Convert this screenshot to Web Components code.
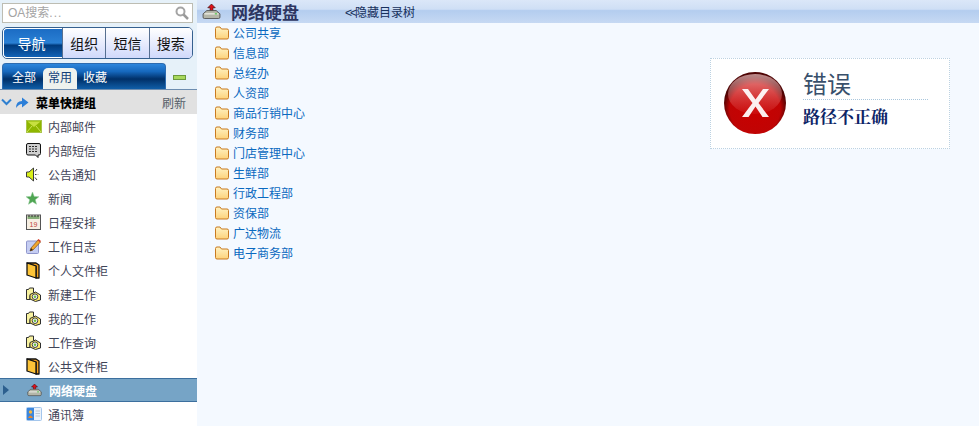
<!DOCTYPE html>
<html>
<head>
<meta charset="utf-8">
<style>
    html, body { margin: 0; height: 100%; overflow: hidden; background: #fff; }
    body { font: 12px "Liberation Sans", "Noto Sans CJK SC", sans-serif; }
</style>
</head>
<body>
<oa-app>
    <oa-sidebar slot="side">
        <menu-item icon="mail">内部邮件</menu-item>
        <menu-item icon="sms">内部短信</menu-item>
        <menu-item icon="speaker">公告通知</menu-item>
        <menu-item icon="star">新闻</menu-item>
        <menu-item icon="calendar">日程安排</menu-item>
        <menu-item icon="note">工作日志</menu-item>
        <menu-item icon="cabinet">个人文件柜</menu-item>
        <menu-item icon="work">新建工作</menu-item>
        <menu-item icon="work">我的工作</menu-item>
        <menu-item icon="work">工作查询</menu-item>
        <menu-item icon="cabinet">公共文件柜</menu-item>
        <menu-item icon="disk" active>网络硬盘</menu-item>
        <menu-item icon="book">通讯簿</menu-item>
    </oa-sidebar>
    <disk-main slot="main">
        <folder-link>公司共享</folder-link>
        <folder-link>信息部</folder-link>
        <folder-link>总经办</folder-link>
        <folder-link>人资部</folder-link>
        <folder-link>商品行销中心</folder-link>
        <folder-link>财务部</folder-link>
        <folder-link>门店管理中心</folder-link>
        <folder-link>生鲜部</folder-link>
        <folder-link>行政工程部</folder-link>
        <folder-link>资保部</folder-link>
        <folder-link>广达物流</folder-link>
        <folder-link>电子商务部</folder-link>
    </disk-main>
</oa-app>
<script>
    // same drawing for the title bar and the menu row, only the size differs
    const diskIcon = (w, h) => `<svg width="${w}" height="${h}" viewBox="0 0 20 16">
        <path d="M8.500 7.500V4H6L10 0l4 4h-2.500v3.500z" fill="#e0101a" stroke="#3a0a0a" stroke-width=".7"/>
        <path d="M5 7h10l4 3.500v3.500q0 1.500-1.500 1.500h-15Q1 15.500 1 14v-3.500z" fill="#b4b6a8" stroke="#4a4a4a" stroke-width=".9"/>
        <path d="M2.500 10.500h15" stroke="#e8e8e0" stroke-width="1.500"/>
        <path d="M13.500 10.500h2.500" stroke="#48c040" stroke-width="1.200"/>
    </svg>`;

    const ICONS = {
        mail: `<svg width="16" height="13" viewBox="0 0 16 13"><rect x=".5" y=".5" width="15" height="12" fill="#8fb600" stroke="#a9c44a"/><path d="M1.500 1.500h13L8 7z" fill="#c8e040"/><path d="M1 12l5-6M15 12l-5-6" stroke="#cfe35a"/></svg>`,
        sms: `<svg width="15" height="15" viewBox="0 0 15 15"><path d="M2 .5h11q1.500 0 1.500 1.500v8.500q0 1.500-1.500 1.500h-1v2.500L9.500 12H2q-1.500 0-1.500-1.500V2Q.5.500 2 .5z" fill="#cfcfcf" stroke="#111"/><path d="M3 3.500h9M3 6h9M3 8.500h9" stroke="#2c2c2c" stroke-dasharray="2 1"/></svg>`,
        speaker: `<svg width="14" height="15" viewBox="0 0 14 15"><path d="M.5 5h2.500L7.500 1v13L3 10H.5z" fill="#d9f01a" stroke="#3c3c3c"/><path d="M9 7.500h1.500M9 4.500l2-2.500M9 10.500l2 2.500" stroke="#3c3c3c"/><path d="M11 7.500h2" stroke="#d8d8c0"/></svg>`,
        star: `<svg width="13" height="13" viewBox="0 0 13 13"><path d="M6.500 0l1.700 4.400 4.700.3-3.600 3 1.200 4.600-4-2.500-4 2.500 1.200-4.600L.1 4.700l4.700-.3z" fill="#4fa552" stroke="#8fc896" stroke-width=".5"/></svg>`,
        calendar: `<svg width="15" height="16" viewBox="0 0 15 16"><rect x=".5" y="1" width="14" height="14.500" fill="#f7efe4" stroke="#555"/><rect x="1.500" y="2" width="12" height="3" fill="#86ad78"/><path d="M3 1v2M6 1v2M9 1v2M12 1v2" stroke="#333"/><text x="7.500" y="13" font-size="7" text-anchor="middle" fill="#c0453c" font-family="Liberation Sans">19</text></svg>`,
        note: `<svg width="15" height="15" viewBox="0 0 15 15"><rect x=".5" y="2" width="12" height="12.500" rx="1" fill="#c5cdf2" stroke="#8f96cc"/><path d="M4 12l1-3 7-8 2.500 2L7 11z" fill="#f2a62e" stroke="#6a4210" stroke-width=".6"/><path d="M11.500 1l1-1 2.500 2-1 1.200z" fill="#d83a2a"/><path d="M4 12l1-3 2 2z" fill="#3a2a10"/></svg>`,
        cabinet: `<svg width="14" height="17" viewBox="0 0 14 17"><path d="M1 1h9l3 2v13h-3V4z" fill="#f2a01c" stroke="#111" stroke-width="1.300" stroke-linejoin="round"/><path d="M1 1l9 3v12l-9-3z" fill="#fdc438" stroke="#111" stroke-width="1.300" stroke-linejoin="round"/></svg>`,
        work: `<svg width="15" height="15" viewBox="0 0 15 15"><path d="M.5 2.500h2l1-1.500h4v4.500h2v3H4v4H.5z" fill="#f8f2a0" stroke="#2e2e2e"/><path d="M4 7.500L9.500 5l5 3v5l-5 1.500L4 12z" fill="#fde868" stroke="#2e2e2e"/><circle cx="9" cy="9.700" r="2.800" fill="#f4f4f4" stroke="#444"/><circle cx="9" cy="9.700" r="1.300" fill="#6cc040"/></svg>`,
        disk: diskIcon(15, 14),
        book: `<svg width="16" height="14" viewBox="0 0 16 14"><rect x=".5" y=".5" width="15" height="13" rx="1" fill="#eaf2fb" stroke="#a4c6ec"/><rect x="1" y="1" width="7" height="12" fill="#3c86dc"/><circle cx="4.500" cy="5" r="1.700" fill="#f6b73c"/><path d="M2 11q2.500-5 5 0z" fill="#e8862a"/><path d="M9.500 4h4.500M9.500 6.500h4.500M9.500 9h4.500" stroke="#bcc8d4"/></svg>`
    };

    class OaApp extends HTMLElement {
        constructor() {
            super();
            this.attachShadow({mode: 'open'}).innerHTML = `
                <style>
                    :host { display: flex; width: 979px; height: 426px; overflow: hidden; }
                    .side { width: 197px; flex: none; background: #fff; }
                    .main { flex: 1; background: #f4f9ff; }
                </style>
                <div class="side"><slot name="side"></slot></div>
                <div class="main"><slot name="main"></slot></div>`;
        }
    }

    class OaSidebar extends HTMLElement {
        constructor() {
            super();
            this.attachShadow({mode: 'open'}).innerHTML = `
                <style>
                    :host { display: flex; flex-direction: column; height: 426px; overflow: hidden; background: #fff; }
                    .top { height: 89px; background: #e6f1f9; padding: 3px 0 0 2px; box-sizing: border-box; flex: none; }
                    .search {
                        width: 191px; height: 20px; box-sizing: border-box; background: #fff;
                        border: 1px solid #bdbdb3; display: flex; align-items: center; justify-content: space-between;
                        padding: 0 3px 0 5px; color: #a4a4a4; font: 12px/16px "Liberation Sans", "Noto Sans CJK SC", sans-serif;
                    }
                    .search i { font-style: normal; letter-spacing: 1px; }
                    .main-tabs {
                        width: 191px; height: 32px; margin-top: 4px; box-sizing: border-box; display: flex;
                        border: 1px solid #35608f; border-radius: 5px; overflow: hidden; background: #dfe7fb;
                    }
                    .main-tabs span {
                        flex: 1; display: flex; align-items: center; justify-content: center; font-size: 14px; color: #111;
                        border-left: 1px solid #566f90; background: linear-gradient(#fff, #d0d9fb);
                    }
                    .main-tabs span.on {
                        flex: none; width: 59px; box-sizing: border-box; padding-right: 3px; border: 1px solid #fff; border-right: 0; color: #fff;
                        border-radius: 4px 0 0 4px;
                        background: linear-gradient(#1b6cc4 0, #2a80d4 50%, #003a7c 58%, #1162b6 100%);
                    }
                    .sub-row { display: flex; margin-top: 4px; height: 26px; }
                    .sub-tabs {
                        width: 164px; box-sizing: border-box; display: flex; align-items: flex-end; padding-left: 9px;
                        border: 1px solid #2b6bb0; border-bottom: 0; border-radius: 4px 4px 0 0; font-size: 12px; color: #fff;
                        background: linear-gradient(#2c86dc 0, #1668bd 30%, #003068 60%, #0f5ea8 100%);
                    }
                    .sub-tabs span { height: 21px; line-height: 20px; }
                    .sub-tabs span.on { background: #eef2ee; color: #123f7a; border-radius: 5px 5px 0 0; padding: 0 5px; margin: 0 6px 0 7px; }
                    .toggle { width: 11px; height: 3px; margin: 12px 0 0 7px; background: #a8d85c; border: 1px solid #6c9a3c; }
                    .group {
                        height: 25px; flex: none; box-sizing: border-box; display: flex; align-items: center; background: #e1e1e1;
                        border-top: 1px solid #6d8db0; font-weight: bold; color: #000; padding-right: 11px;
                    }
                    .group b { margin-left: 7px; flex: 1; }
                    .group span { font-weight: normal; color: #555e68; }
                    .list { display: flex; flex-direction: column; flex: 1; }
                </style>
                <div class="top">
                    <div class="search"><span>OA搜索<i>...</i></span>
                        <svg width="14" height="14" viewBox="0 0 14 14"><circle cx="5.500" cy="5.500" r="4" fill="none" stroke="#a4a4a4" stroke-width="2"/><path d="M8.500 8.500l4.500 4.500" stroke="#9a9a9a" stroke-width="2.500"/></svg>
                    </div>
                    <div class="main-tabs"><span class="on">导航</span><span>组织</span><span>短信</span><span>搜索</span></div>
                    <div class="sub-row">
                        <div class="sub-tabs"><span>全部</span><span class="on">常用</span><span>收藏</span></div>
                        <div class="toggle"></div>
                    </div>
                </div>
                <div class="group">
                    <svg width="11" height="8" viewBox="0 0 11 8" style="margin-left:1px"><path d="M1 1.500l4.500 4.500L10 1.500" fill="none" stroke="#2f80d0" stroke-width="2"/></svg>
                    <svg width="14" height="14" viewBox="0 0 14 14" style="margin-left:3px"><path d="M1 13q0-7 6-7V2.500l6.500 5L7 12.500V9q-3 0-6 4z" fill="#2c7fd8"/></svg>
                    <b>菜单快捷组</b><span>刷新</span>
                </div>
                <div class="list"><slot></slot></div>`;
        }
    }

    class MenuItem extends HTMLElement {
        constructor() {
            super();
            this.attachShadow({mode: 'open'});
        }
        connectedCallback() {
            const icon = ICONS[this.getAttribute('icon')] || '';
            this.shadowRoot.innerHTML = `
                <style>
                    :host { display: flex; align-items: center; height: 24px; flex: none; box-sizing: border-box; color: #3f4458; position: relative; }
                    :host([active]) { background: #76a4c6; border-top: 1px solid #3c6f9e; border-bottom: 1px solid #3c6f9e; color: #fff; font-weight: bold; }
                    :host([active])::before {
                        content: ""; position: absolute; left: 3px; top: 6px; border-left: 6px solid #2c5f8e;
                        border-top: 5px solid transparent; border-bottom: 5px solid transparent;
                    }
                    .ico { width: 22px; margin-left: 26px; display: flex; justify-content: flex-start; }
                    :host([active]) .ico { margin-left: 27px; }
                </style>
                <div class="ico">${icon}</div><slot></slot>`;
        }
    }

    class DiskMain extends HTMLElement {
        constructor() {
            super();
            this.attachShadow({mode: 'open'}).innerHTML = `
                <style>
                    :host { display: block; position: relative; height: 426px; }
                    .head {
                        height: 23px; display: flex; align-items: center; padding-left: 5px; box-sizing: border-box;
                        background: linear-gradient(#dbe7f8 0, #cfdff5 40%, #b4cdef 46%, #c6d9f3 100%);
                    }
                    .head b { font-size: 17px; color: #2d3561; margin-left: 10px; width: 114px; }
                    .head span { color: #17305c; }
                    .head i { font-style: normal; letter-spacing: -2px; }
                    .tree { display: flex; flex-direction: column; margin-top: -1px; padding-left: 18px; }
                    .err { position: absolute; left: 513px; top: 58px; }
                </style>
                <div class="head">${diskIcon(19, 15)}<b>网络硬盘</b><span><i>&lt;&lt;</i>隐藏目录树</span></div>
                <div class="tree"><slot></slot></div>
                <error-box class="err" title="错误">路径不正确</error-box>`;
        }
    }

    class FolderLink extends HTMLElement {
        constructor() {
            super();
            this.attachShadow({mode: 'open'}).innerHTML = `
                <style>
                    :host { display: flex; align-items: center; height: 20px; color: #0a69c0; flex: none; }
                    svg { margin-right: 4px; margin-top: 2px; }
                </style>
                <svg width="14" height="14" viewBox="0 0 14 14">
                    <defs><linearGradient id="f" x1="0" y1="0" x2="0" y2="1"><stop offset="0" stop-color="#fff3c4"/><stop offset="1" stop-color="#fdd27a"/></linearGradient></defs>
                    <path d="M.5 2.500q0-1.500 1.500-1.500h3l1.500 2H12q1.500 0 1.500 1.500v7q0 1.500-1.500 1.500H2q-1.500 0-1.500-1.500z" fill="url(#f)" stroke="#c87a20"/>
                </svg>
                <slot></slot>`;
        }
    }

    class ErrorBox extends HTMLElement {
        constructor() {
            super();
            this.attachShadow({mode: 'open'});
        }
        connectedCallback() {
            this.shadowRoot.innerHTML = `
                <style>
                    :host { display: block; }
                    .box {
                        width: 240px; height: 91px; box-sizing: border-box; background: #fff; border: 1px dotted #bcd2e2;
                        display: flex; padding: 13px 21px 0 13px;
                    }
                    .txt { margin-left: 17px; flex: 1; }
                    h3 { margin: 0; font: normal 24px/27px "Liberation Serif", "Noto Sans CJK SC", serif; color: #39506b; height: 27px; border-bottom: 1px dotted #a9c6dc; }
                    p { margin: 0; padding-top: 8px; font: bold 17px/20px "Liberation Serif", "Noto Serif CJK SC", "Noto Sans CJK SC", serif; color: #0c2466; }
                </style>
                <div class="box">
                    <svg width="62" height="62" viewBox="0 0 62 62">
                        <defs>
                            <radialGradient id="ball" cx=".5" cy=".6" r=".52"><stop offset="0" stop-color="#c80000"/><stop offset=".78" stop-color="#c00404"/><stop offset="1" stop-color="#4e0404"/></radialGradient>
                            <linearGradient id="gloss" x1="0" y1="0" x2="0" y2="1"><stop offset="0" stop-color="#ffdcdc" stop-opacity=".62"/><stop offset="1" stop-color="#ff9090" stop-opacity=".08"/></linearGradient>
                        </defs>
                        <circle cx="31" cy="31" r="31" fill="url(#ball)"/>
                        <ellipse cx="31" cy="22" rx="27" ry="20" fill="url(#gloss)"/>
                        <path d="M18 17h6l7.500 10.500L39 17h6L34.500 31 45 45h-6.500l-7-10.500-7 10.500H18l10.500-14z" fill="#fff" opacity=".93"/>
                    </svg>
                    <div class="txt"><h3>${this.getAttribute('title')}</h3><p><slot></slot></p></div>
                </div>`;
        }
    }

    customElements.define('oa-app', OaApp);
    customElements.define('oa-sidebar', OaSidebar);
    customElements.define('menu-item', MenuItem);
    customElements.define('disk-main', DiskMain);
    customElements.define('folder-link', FolderLink);
    customElements.define('error-box', ErrorBox);
</script>
</body>
</html>
